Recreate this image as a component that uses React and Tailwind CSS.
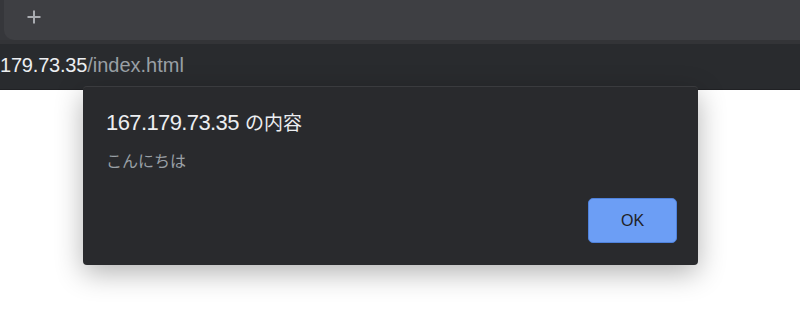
import React from 'react';

const Plus = () => (
    <svg width="14" height="14" viewBox="0 0 14 14" fill="none">
        <path d="M7 0.5V13.5M0.5 7H13.5" stroke="#a9acb1" strokeWidth="2" />
    </svg>
);

const App = () => {
    return (
        <div className="relative w-[800px] h-[317px] overflow-hidden bg-white" style={{ fontFamily: '"Liberation Sans", "Noto Sans CJK JP", sans-serif' }}>
            {/* --- BROWSER CHROME --- */}
            <div className="bg-[#36373b]">
                <div className="ml-[4px] h-[40px] rounded-bl-[10px] bg-[#3e3f43] flex items-center pl-[23px] pb-[6px]">
                    <Plus />
                </div>
                <div className="h-[4px] bg-[#333437]" />
            </div>
            <div className="h-[46px] bg-[#292b2e] flex items-center pb-[4px] border-b border-[#202124]">
                <span className="text-[20px] leading-none text-[#eceef1] tracking-[-0.2px]">179.73.35</span>
                <span className="text-[20px] leading-none text-[#9aa0a6]">/index.html</span>
            </div>

            {/* --- ALERT DIALOG --- */}
            <div className="absolute left-[83px] top-[86px] w-[615px] h-[179px] bg-[#292a2d] rounded-[4px] border-t border-[#3a3b3e] shadow-[0_8px_28px_rgba(0,0,0,0.3)] flex flex-col pl-[23px] pr-[21px] pb-[22px]">
                <div className="mt-[25px] flex items-baseline text-[#eceef1] leading-none">
                    <span className="text-[22px] tracking-[-0.6px]">167.179.73.35</span>
                    <span className="text-[19px] ml-[6px]">の内容</span>
                </div>
                <div className="mt-[20px] text-[16px] leading-none text-[#9aa0a6]">こんにちは</div>
                <div className="mt-auto flex justify-end">
                    <button className="w-[89px] h-[45px] rounded-[5px] bg-[#6c9ef5] border border-[#4f82dc] text-[#1f2227] text-[16px] font-medium">
                        OK
                    </button>
                </div>
            </div>
        </div>
    );
};

export default App;
